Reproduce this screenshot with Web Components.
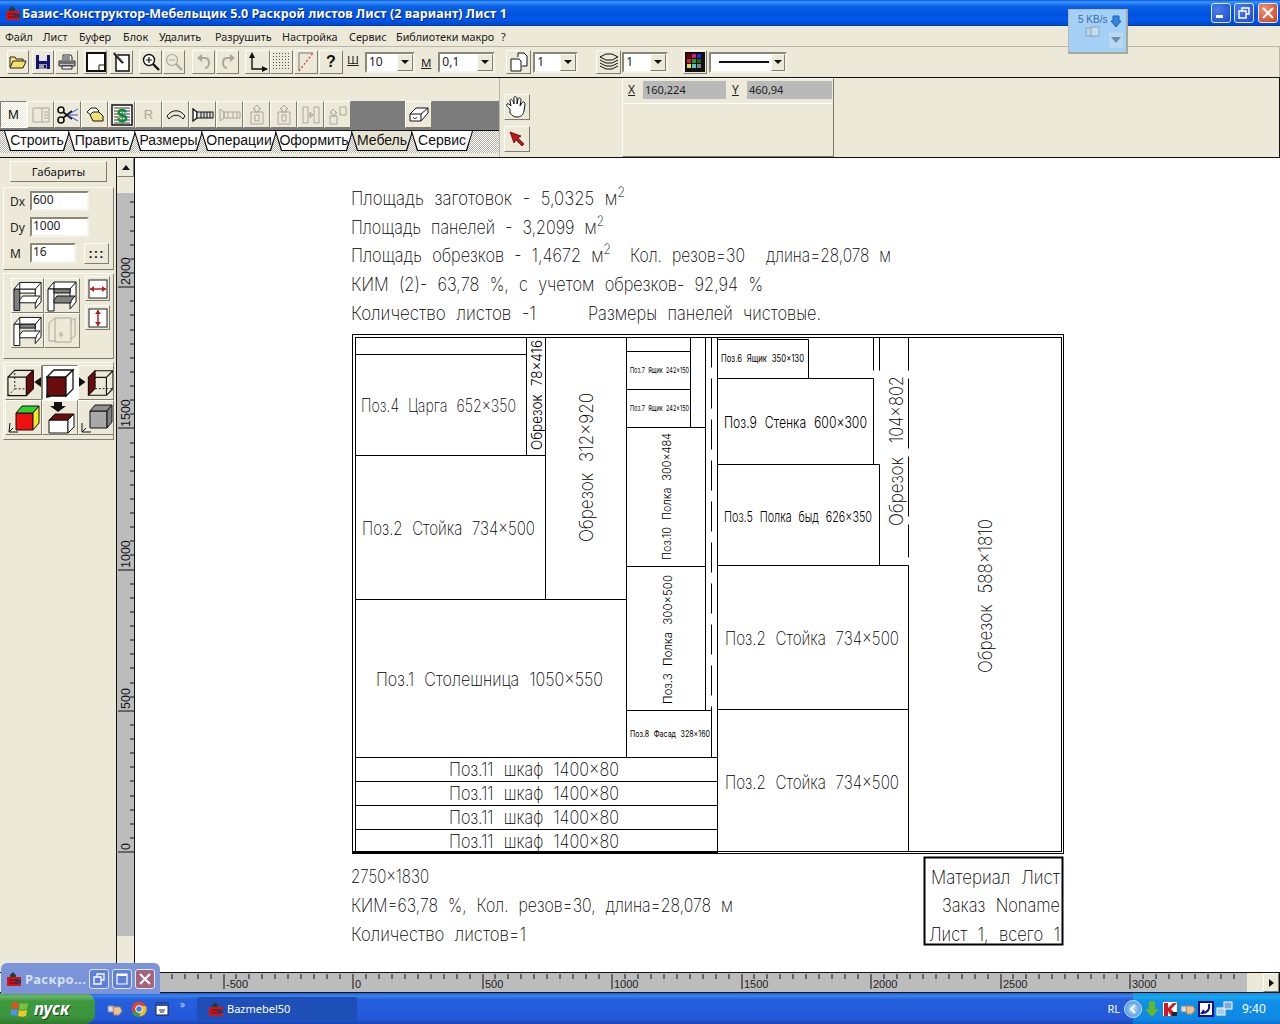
<!DOCTYPE html>
<html lang="ru">
<head>
<meta charset="utf-8">
<title>Базис-Конструктор-Мебельщик</title>
<style>
  html, body { margin: 0; padding: 0; height: 1024px; overflow: hidden; background: #ece9d8; }
  body { font-family: "Noto Sans", "Liberation Sans", sans-serif; }
</style>
</head>
<body>
<app-window></app-window>
<script>
// Shared bits
const BEVEL = 'border:1px solid;border-color:#fdfdf8 #7f7d70 #7f7d70 #fdfdf8;box-sizing:border-box;background:#ece9d8;';
const SUNK = 'border:2px solid;border-color:#8a8878 #f5f4ea #f5f4ea #8a8878;box-sizing:border-box;';
const UI_FONT = '"Noto Sans","Liberation Sans",sans-serif';
const ARIAL = '"Liberation Sans",Arial,sans-serif';

const svg = (w, h, body, vb) => `<svg xmlns="http://www.w3.org/2000/svg" width="${w}" height="${h}" viewBox="${vb || `0 0 ${w} ${h}`}">${body}</svg>`;
const LOGO = svg(16, 16, '<path d="M4 4l3-3 3 3v2H4z" fill="#1d3f3a"/><rect x="1" y="6" width="14" height="9" fill="#d0141a"/><path d="M3 9h10M3 12h10" stroke="#5a1010"/><rect x="9" y="9" width="6" height="3" fill="#243a5a"/>');

const GREY = '#a9a79a';
const ICONS = {
  open: svg(18, 16, '<path d="M1 13V3h5l1 2h7v2" fill="#f6e27a" stroke="#222"/><path d="M1 14l3-7h13l-3 7z" fill="#f5e06c" stroke="#222"/>'),
  save: svg(16, 16, '<rect x="1" y="1" width="14" height="14" fill="#14146e"/><rect x="4" y="1" width="8" height="6" fill="#e6e6f0"/><rect x="4" y="10" width="8" height="5" fill="#9c9cae"/><rect x="9" y="11" width="2" height="3" fill="#14146e"/>'),
  print: svg(18, 16, '<path d="M5 6V1h8l1 2v3" fill="#fff" stroke="#222"/><path d="M1 7h16v5H1z" fill="#bbb" stroke="#222"/><path d="M4 12h10v3H4zM2 9h14M6 3h6M6 5h6" fill="#fff" stroke="#222"/>'),
  sheet: svg(20, 20, '<path d="M1 1h18v18H1z" fill="#fff" stroke="#111" stroke-width="2"/><path d="M19 13h-6v6" fill="none" stroke="#111"/>'),
  sheetEdit: svg(18, 20, '<path d="M3 3h13v16H3z" fill="#fff" stroke="#111" stroke-width="1.5"/><path d="M1 1l9 10" stroke="#111" stroke-width="2.5"/><path d="M2 1l8 9" stroke="#999"/>'),
  zoomIn: svg(18, 18, '<circle cx="7" cy="7" r="5.5" fill="#fff" stroke="#111" stroke-width="1.4"/><path d="M4 7h6M7 4v6" stroke="#111" stroke-width="1.2"/><path d="M11 11l6 6" stroke="#111" stroke-width="2.4"/>'),
  zoomOut: svg(18, 18, `<circle cx="7" cy="7" r="5.5" fill="none" stroke="${GREY}" stroke-width="1.2"/><path d="M4 7h6" stroke="${GREY}"/><path d="M11 11l6 6" stroke="${GREY}" stroke-width="2"/>`),
  undo: svg(14, 16, `<path d="M4 4h4c3 0 4 2 4 5s-2 5-4 5" fill="none" stroke="${GREY}" stroke-width="2"/><path d="M5 0v8L0 4z" fill="${GREY}"/>`),
  redo: svg(14, 16, `<path d="M10 4H6C3 4 2 6 2 9s2 5 4 5" fill="none" stroke="${GREY}" stroke-width="2"/><path d="M9 0v8l5-4z" fill="${GREY}"/>`),
  axes: svg(20, 20, '<path d="M4 3v14h15" fill="none" stroke="#111" stroke-width="1.4"/><path d="M4 0L1 6h6zM20 17l-6-3v6z" fill="#111"/>'),
  grid: svg(18, 18, '<defs><pattern id="d" width="3" height="3" patternUnits="userSpaceOnUse"><rect width="1" height="1" fill="#555"/></pattern></defs><rect width="18" height="18" fill="url(#d)"/>'),
  snap: svg(18, 20, '<path d="M2 1v18" stroke="#777"/><path d="M2 1h14" stroke="#777"/><path d="M2 19L16 1" stroke="#d23c3c" stroke-dasharray="2 2" stroke-width="1.3"/>'),
  copies: svg(20, 20, '<path d="M9 5V1h6l3 3v10h-5" fill="#fff" stroke="#111"/><path d="M2 7h8l2 2v10H2z" fill="#fff" stroke="#111"/>'),
  layers: svg(20, 18, '<path d="M1 4l6-3h6l6 3-6 3H7zM1 7l6 3h6l6-3M1 10l6 3h6l6-3M1 13l6 3h6l6-3" fill="none" stroke="#111"/>'),
  palette: svg(20, 20, '<rect width="20" height="20" fill="#111"/><g><rect x="2" y="2" width="4" height="4" fill="#800000"/><rect x="7" y="2" width="4" height="4" fill="#e0148c"/><rect x="12" y="2" width="4" height="4" fill="#2030c0"/><rect x="2" y="7" width="4" height="4" fill="#e02020"/><rect x="7" y="7" width="4" height="4" fill="#18a018"/><rect x="12" y="7" width="4" height="4" fill="#206020"/><rect x="2" y="12" width="4" height="4" fill="#e0e040"/><rect x="7" y="12" width="4" height="4" fill="#50c8c8"/><rect x="12" y="12" width="4" height="4" fill="#808080"/></g>'),
  doc: svg(20, 18, `<path d="M2 2h16v14H2zM11 2v14M13 6h4M13 9h4M13 12h4" fill="none" stroke="${GREY}"/>`),
  cut: svg(22, 20, '<circle cx="4" cy="5" r="3" fill="none" stroke="#111" stroke-width="1.6"/><circle cx="4" cy="15" r="3" fill="none" stroke="#111" stroke-width="1.6"/><path d="M6 7l9 7M6 13l9-7" stroke="#111" stroke-width="1.6"/><path d="M12 9l9-5M12 10h9M12 11l9 5" stroke="#2f57c8"/>'),
  stack: svg(18, 16, '<path d="M1 5l4-4h5l3 3-4 4H5z" fill="#fff" stroke="#111"/><path d="M4 8l3-3h6l4 4v5H7z" fill="#f0e070" stroke="#111"/>'),
  dollar: svg(22, 22, '<rect x="1" y="1" width="20" height="20" fill="#fff" stroke="#111" stroke-width="1.5"/><path d="M3 4h16M3 7h16M3 10h16M3 13h16M3 16h16M3 19h16" stroke="#333"/><text x="11" y="18" text-anchor="middle" font-family="Liberation Sans" font-weight="700" font-size="19" fill="#0a8a30">$</text>'),
  arc: svg(20, 12, '<path d="M1 7C6 0 14 0 19 7l-2 3C13 5 7 5 3 10z" fill="none" stroke="#111"/>'),
  screw: svg(22, 14, '<path d="M1 1l4 3v6l-4 3z" fill="#fff" stroke="#111" stroke-width="1.3"/><rect x="5" y="4" width="16" height="6" fill="#ddd" stroke="#111"/><path d="M9 4v6M12 4v6M15 4v6M18 4v6" stroke="#111"/>'),
  screwOff: svg(22, 14, `<path d="M1 1l4 3v6l-4 3zM5 4h16v6H5zM9 4v6M14 4v6M18 4v6" fill="none" stroke="${GREY}"/>`),
  up1: svg(16, 20, `<path d="M8 0L4 4h2v3h4V4h2zM2 7h12v12H2zM6 10h4v6H6z" fill="none" stroke="${GREY}"/>`),
  mirror: svg(18, 18, `<path d="M1 1h5v16H1zM12 1h5v16h-5zM7 9h3M8 6l3 3-3 3z" fill="none" stroke="${GREY}"/>`),
  up4: svg(20, 20, `<path d="M5 4L2 8h2v3h3V8h2zM2 11h7v8H2zM12 2h6v8h-6z" fill="none" stroke="${GREY}"/>`),
  eraser: svg(20, 16, '<path d="M1 7l6-6h12v5l-7 8H1z" fill="#fff" stroke="#111"/><path d="M1 7h11v7M12 7l7-6M4 10c1 2 3 2 4 0" fill="none" stroke="#111"/>'),
  hand: svg(22, 24, '<path d="M4 14c-2-2-4-3-3-5 1-1 3 1 4 2L4 6c0-2 2-2 3 0l1 3V3c0-2 2-2 3 0v6l1-5c1-2 3-1 3 1l-1 6 2-3c1-2 3-1 3 1l-1 7c-1 4-3 6-7 6-4 0-5-2-7-4z" fill="#fff" stroke="#111"/>'),
  pointer: svg(16, 16, '<path d="M1 1l11 4-3 2 6 6-2 2-6-6-2 3z" fill="#c01818" stroke="#400" stroke-width=".7"/>'),
  hArrow: svg(22, 20, '<rect x="2" y="1" width="18" height="18" fill="#fff" stroke="#222"/><path d="M3 10h16" stroke="#b02020" stroke-width="1.5"/><path d="M3 10l4-3v6zM19 10l-4-3v6z" fill="#b02020"/>'),
  vArrow: svg(20, 22, '<rect x="1" y="2" width="18" height="18" fill="#fff" stroke="#222"/><path d="M10 3v16" stroke="#b02020" stroke-width="1.5"/><path d="M10 3L7 7h6zM10 19l-3-4h6z" fill="#b02020"/>')
};

// furniture pictures for the side panel
const shelf = (a, b, c) => svg(32, 32, `<path d="M2 9l6-7h22v20l-6 7V9H2z" fill="#fff" stroke="#111"/><path d="M8 2v8M24 9l6-7" stroke="#111"/><path d="M2 9v22h6V9z" fill="${a}" stroke="#111"/><path d="M8 9h16v4H8z" fill="${b}" stroke="#111"/><path d="M8 20l3-4h18l-4 5v2H8z" fill="${c}" stroke="#111"/>`);
const cube = (front, side, top, extra = '') => svg(32, 32, `<path d="M3 10h19v19H3z" fill="${front}" stroke="#111" stroke-width="1.3"/><path d="M3 10l7-7h19l-7 7z" fill="${top}" stroke="#111" stroke-width="1.3"/><path d="M22 10l7-7v19l-7 7z" fill="${side}" stroke="#111" stroke-width="1.3"/>${extra}`);
const WIRE = '<path d="M2 10h19v19H2zM2 10l7-7h19v19l-7 7M21 10l7-7" fill="none" stroke="#111" stroke-width="1.2"/><path d="M2 29l7-7V3M9 22h19" fill="none" stroke="#111" stroke-dasharray="2 2"/>';

// --- Generic widgets

class ToolBtn extends HTMLElement {
  constructor() {
    super();
    this.attachShadow({ mode: 'open' });
    const w = this.getAttribute('w') || 27;
    const h = this.getAttribute('h') || 27;
    this.shadowRoot.innerHTML = `
      <style>
        :host { display: flex; align-items: center; justify-content: center; flex: none; width: ${w}px; height: ${h}px; ${BEVEL}
          font: 13px ${ARIAL}; color: #111; }
        :host([pressed]) { background: repeating-conic-gradient(#fff 0 25%, #ece9d8 0 50%) 0 0/2px 2px; border-color: #7f7d70 #fdfdf8 #fdfdf8 #7f7d70; }
      </style><slot></slot>`;
  }
}

class ComboBox extends HTMLElement {
  constructor() {
    super();
    this.attachShadow({ mode: 'open' });
    const w = this.getAttribute('w') || 46;
    this.shadowRoot.innerHTML = `
      <style>
        :host { display: flex; flex: none; width: ${w}px; height: 21px; ${SUNK} background: #fff; font: 12px ${UI_FONT}; color: #222; }
        .v { flex: 1; padding-left: 2px; line-height: 16px; white-space: nowrap; display: flex; align-items: center; }
        .b { width: 16px; ${BEVEL} display: flex; align-items: center; justify-content: center; }
        .b i { border: 4px solid transparent; border-top: 4px solid #111; border-bottom: 0; width: 0; height: 0; }
      </style>
      <div class="v"><slot></slot></div><div class="b"><i></i></div>`;
  }
}

class TextField extends HTMLElement {
  constructor() {
    super();
    this.attachShadow({ mode: 'open' });
    const w = this.getAttribute('w') || 59;
    this.shadowRoot.innerHTML = `
      <style>
        :host { display: block; flex: none; width: ${w}px; height: 20px; ${SUNK} background: #fff;
          font: 12px ${UI_FONT}; color: #222; line-height: 13px; padding-left: 1px; }
      </style><slot></slot>`;
  }
}

class SheetTab extends HTMLElement {
  constructor() {
    super();
    this.attachShadow({ mode: 'open' });
    const w = this.getAttribute('w') || 60;
    const shape = 'polygon(0 0, 100% 0, calc(100% - 6px) 100%, 6px 100%)';
    this.shadowRoot.innerHTML = `
      <style>
        :host { display: block; flex: none; width: ${w}px; height: 20px; margin-right: -2px; background: #000; clip-path: ${shape}; }
        .in { height: 19px; margin: 0 1px; background: #fff; clip-path: ${shape}; text-align: center; font: 14px/19px ${ARIAL}; color: #111; white-space: nowrap; }
        :host([off]) .in { background: #e6e3d3; }
      </style><div class="in"><slot></slot></div>`;
  }
}

// --- Window chrome

class TitleBar extends HTMLElement {
  constructor() {
    super();
    this.attachShadow({ mode: 'open' });
    this.shadowRoot.innerHTML = `
      <style>
        :host { display: flex; align-items: center; height: 26px; flex: none; padding: 0 2px 0 5px; box-sizing: border-box;
          background: linear-gradient(#0a5ad8 0, #3d95ff 2px, #0a62e6 6px, #0053e0 14px, #0058ea 20px, #0046c8 25px, #0036a0 26px); }
        .t { margin-left: 1px; font: 700 12.5px ${UI_FONT}; letter-spacing: .04px; color: #fff; text-shadow: 1px 1px #0f1f70; white-space: nowrap; flex: 1; }
        .b { width: 20px; height: 20px; margin-left: 3px; border: 1px solid #dfe8ff; border-radius: 3px; box-sizing: border-box; display: flex; align-items: center; justify-content: center;
          background: radial-gradient(circle at 30% 30%, #4a80ee, #1f48c8); }
        .x { background: radial-gradient(circle at 30% 30%, #f09070, #c8401c); margin-left: 4px; }
      </style>
      ${LOGO}
      <span class="t">Базис-Конструктор-Мебельщик 5.0 Раскрой листов Лист (2 вариант) Лист 1</span>
      <span class="b">${svg(12, 12, '<rect x="1" y="8" width="7" height="3" fill="#fff"/>')}</span>
      <span class="b">${svg(12, 12, '<path d="M4 4V1h7v6H8M1 4h7v7H1z" fill="none" stroke="#fff" stroke-width="1.4"/>')}</span>
      <span class="b x">${svg(12, 12, '<path d="M1 1l10 10M11 1L1 11" stroke="#fff" stroke-width="2"/>')}</span>`;
  }
}

class MenuBar extends HTMLElement {
  constructor() {
    super();
    this.attachShadow({ mode: 'open' });
    const items = [['Файл', 5], ['Лист', 43], ['Буфер', 79], ['Блок', 123], ['Удалить', 159], ['Разрушить', 215], ['Настройка', 282], ['Сервис', 349], ['Библиотеки макро', 396], ['?', 501]];
    let html = '';
    items.forEach(([t, x], i) => {
      const next = i + 1 < items.length ? items[i + 1][1] : x + 10;
      html += `<span style="width:${next - x}px">${t}</span>`;
    });
    this.shadowRoot.innerHTML = `
      <style>
        :host { display: flex; align-items: center; height: 20px; flex: none; padding-left: 5px; box-sizing: border-box; background: #ece9d8;
          font: 10.8px ${UI_FONT}; color: #1a1a1a; }
        span { flex: none; white-space: nowrap; }
      </style>${html}`;
  }
}

class MainToolbar extends HTMLElement {
  constructor() {
    super();
    this.attachShadow({ mode: 'open' });
    const b = (ml, w, icon) => `<tool-btn w="${w}" h="24" style="margin-left:${ml}px">${icon}</tool-btn>`;
    this.shadowRoot.innerHTML = `
      <style>
        :host { display: flex; align-items: center; height: 31px; flex: none; box-sizing: border-box; padding: 0 0 0 7px; background: #ece9d8;
          border-top: 1px solid #b9b7a8; border-right: 1px solid #b9b7a8; font: 11.5px ${UI_FONT}; color: #222; }
        u { flex: none; }
      </style>
      ${b(0, 22, ICONS.open)}${b(3, 22, ICONS.save)}${b(1, 23, ICONS.print)}
      ${b(6, 23, ICONS.sheet)}${b(3, 23, ICONS.sheetEdit)}
      ${b(6, 23, ICONS.zoomIn)}${b(1, 22, ICONS.zoomOut)}
      ${b(7, 23, ICONS.undo)}${b(1, 23, ICONS.redo)}
      ${b(6, 25, ICONS.axes)}${b(0, 23, ICONS.grid)}${b(1, 24, ICONS.snap)}
      ${b(1, 24, '<b style="font:700 16px Liberation Sans">?</b>')}
      <u style="margin:-6px 0 0 4px">Ш</u>
      <combo-box w="50" style="margin-left:6px">10</combo-box>
      <u style="margin-left:6px">М</u>
      <combo-box w="57" style="margin-left:7px">0,1</combo-box>
      ${b(11, 25, ICONS.copies)}
      <combo-box w="45" style="margin-left:2px">1</combo-box>
      ${b(18, 25, ICONS.layers)}
      <combo-box w="46" style="margin-left:1px">1</combo-box>
      ${b(15, 24, ICONS.palette)}
      <combo-box w="78" style="margin-left:2px"><svg width="52" height="3" style="margin-left:6px"><rect width="50" height="2" y="0" fill="#111"/></svg></combo-box>`;
  }
}

class BlockRow extends HTMLElement {
  constructor() {
    super();
    this.attachShadow({ mode: 'open' });
    const list = [ICONS.doc, ICONS.cut, ICONS.stack, ICONS.dollar, `<span style="color:${GREY}">R</span>`, ICONS.arc, ICONS.screw, ICONS.screwOff, ICONS.up1, ICONS.up1, ICONS.mirror, ICONS.up4];
    this.shadowRoot.innerHTML = `
      <style>
        :host { display: flex; height: 100%; background: #7c7c7c; }
      </style>
      <tool-btn pressed>М</tool-btn>
      ${list.map(i => `<tool-btn>${i}</tool-btn>`).join('')}
      <tool-btn style="margin-left:54px">${ICONS.eraser}</tool-btn>`;
  }
}

class BlockPanel extends HTMLElement {
  constructor() {
    super();
    this.attachShadow({ mode: 'open' });
    this.shadowRoot.innerHTML = `
      <style>
        :host { display: flex; height: 81px; flex: none; box-sizing: border-box; background: #ece9d8; border-top: 1px solid #111; border-bottom: 1px solid #111; border-right: 1px solid #111; }
        .l { width: 500px; flex: none; display: flex; flex-direction: column; border-right: 1px solid #b9b7a8; box-sizing: border-box; }
        .sp { height: 23px; flex: none; }
        .rw { height: 29px; flex: none; }
        .tabs { height: 22px; flex: none; display: flex; padding: 0 0 0 4px; border-top: 1px solid #111; background: repeating-conic-gradient(#fff 0 25%, #b4b2a6 0 50%) 0 0/2px 2px; }
        .m { width: 33px; flex: none; display: flex; flex-direction: column; gap: 6px; padding: 16px 0 0 4px; box-sizing: border-box; }
        .st { margin-left: 89px; width: 212px; flex: none; height: 79px; ${BEVEL} font: 11px ${UI_FONT}; color: #222; }
        .c { display: flex; align-items: center; height: 21px; padding-bottom: 3px; border-bottom: 1px solid #fff; }
        .c u { width: 9px; margin: 0 6px; font-size: 12px; }
        .f { height: 18px; background: #b9b9b9; line-height: 18px; padding-left: 2px; box-sizing: border-box; }
      </style>
      <div class="l">
        <div class="sp"></div>
        <div class="rw"><block-row></block-row></div>
        <div class="tabs">
          <sheet-tab w="66">Строить</sheet-tab><sheet-tab w="68">Править</sheet-tab><sheet-tab w="69">Размеры</sheet-tab>
          <sheet-tab w="76">Операции</sheet-tab><sheet-tab w="78">Оформить</sheet-tab><sheet-tab w="62" off>Мебель</sheet-tab><sheet-tab w="62">Сервис</sheet-tab>
        </div>
      </div>
      <div class="m">
        <tool-btn w="26" h="26">${ICONS.hand}</tool-btn>
        <tool-btn w="26" h="26">${ICONS.pointer}</tool-btn>
      </div>
      <div class="st">
        <div class="c"><u style="margin-left:5px">X</u><div class="f" style="width:83px">160,224</div><u>Y</u><div class="f" style="width:85px">460,94</div></div>
      </div>`;
  }
}

// --- Side panel

class SidePanel extends HTMLElement {
  constructor() {
    super();
    this.attachShadow({ mode: 'open' });
    const g = s => `<tool-btn w="${s[0]}" h="${s[1]}"${s[3] || ''}>${s[2]}</tool-btn>`;
    this.shadowRoot.innerHTML = `
      <style>
        :host { display: flex; flex-direction: column; width: 116px; flex: none; box-sizing: border-box; padding-top: 3px; background: #ece9d8; font: 12px ${UI_FONT}; color: #222; }
        .gab { margin-left: 10px; font: 11.5px ${UI_FONT}; }
        .grp { ${BEVEL} margin: 5px 2px 0 3px; }
        .fields { height: 83px; display: grid; grid-template-columns: 26px 1fr; grid-auto-rows: 26px; align-items: center; }
        .fields label { padding-left: 6px; font-size: 12px; }
        .last { display: flex; align-items: center; }
        .boxes { height: 86px; display: flex; padding: 4px 0 0 7px; margin-top: 3px; }
        .bx { display: grid; grid-template-columns: 33px 36px; grid-auto-rows: 35px; }
        .sm { display: flex; flex-direction: column; gap: 4px; margin-left: 5px; margin-top: -2px; }
        .cubes { display: grid; grid-template-columns: 37px 36px 36px; grid-auto-rows: 35px; padding: 2px 0 4px 1px; margin-top: 3px; }
      </style>
      <tool-btn class="gab" w="97" h="21">Габариты</tool-btn>
      <div class="grp fields">
        <label>Dx</label><text-field>600</text-field>
        <label>Dy</label><text-field>1000</text-field>
        <label>М</label><div class="last"><text-field w="46">16</text-field><tool-btn w="25" h="21" style="margin-left:8px"><b style="letter-spacing:1px">:::</b></tool-btn></div>
      </div>
      <div class="grp boxes">
        <div class="bx">
          ${g([33, 35, shelf('#808080', '#fff', '#fff')])}${g([36, 35, shelf('#fff', '#808080', '#808080')])}
          ${g([33, 35, shelf('#fff', '#808080', '#fff')])}${g([36, 35, svg(30, 32, `<path d="M2 8l6-5h16v24H8v-1H2zM8 3v24M13 18h2v3h-2zM24 6l4-3v18l-4 3" fill="none" stroke="${GREY}"/>`)])}
        </div>
        <div class="sm">
          ${g([25, 25, ICONS.hArrow])}${g([25, 25, ICONS.vArrow])}
        </div>
      </div>
      <div class="grp cubes">
        ${g([37, 35, svg(36, 32, WIRE + '<path d="M21 10l7-7v19l-7 7z" fill="#6a0c0c" stroke="#111"/><path d="M29 15l7-5v10z" fill="#111"/>')])}
        <tool-btn w="36" h="35" pressed style="background:#fff">${cube('#6a0c0c', '#fff', '#fff', '<path d="M2 31l5-1-4-4z" fill="#111"/>')}</tool-btn>
        ${g([36, 35, svg(36, 32, '<g transform="translate(8 0)">' + WIRE + '<path d="M2 10l7-7v19l-7 7z" fill="#6a0c0c" stroke="#111"/></g><path d="M7 15L0 10v10z" fill="#111"/>')])}
        ${g([37, 35, svg(34, 32, '<path d="M9 11h17v17H9z" fill="#f01010" stroke="#111"/><path d="M9 11l6-7h17l-6 7z" fill="#30d030" stroke="#111"/><path d="M26 11l6-7v17l-6 7z" fill="#f0e820" stroke="#111"/><path d="M2 30h9M2 30l1-9M2 30l4-4" stroke="#111"/>')])}
        ${g([36, 35, svg(32, 32, '<path d="M10 0h8v4h4l-8 6-8-6h4z" fill="#111"/><path d="M5 18h19v13H5z" fill="#fff" stroke="#111"/><path d="M5 18l6-6h19l-6 6z" fill="#6a0c0c" stroke="#111"/><path d="M24 18l6-6v13l-6 6z" fill="#fff" stroke="#111"/>')])}
        ${g([36, 35, svg(34, 32, '<path d="M11 9h17v17H11z" fill="#a8a8a8" stroke="#111"/><path d="M11 9l5-6h17l-5 6z" fill="#909090" stroke="#111"/><path d="M28 9l5-6v17l-5 6z" fill="#808080" stroke="#111"/><path d="M3 30h9M3 30v-9M3 30l4-4" stroke="#111"/>')])}
      </div>`;
  }
}

// --- Rulers

class VRuler extends HTMLElement {
  constructor() {
    super();
    this.attachShadow({ mode: 'open' });
    let t = '';
    for (let i = 0; i <= 50; i++) {
      const y = 851 - 157 - i * 14.12;
      if (y < 35) break;
      t += `<path d="M${i % 10 == 0 ? 1 : 13} ${y.toFixed(0)}h${i % 10 == 0 ? 16 : 4}" stroke="#111"/>`;
    }
    const labels = [[0, '0'], [141, '500'], [282, '1000'], [423, '1500'], [565, '2000']];
    labels.forEach(([d, s]) => {
      const y = 851 - 157 - d - 2;
      t += `<text transform="rotate(-90 13 ${y})" x="13" y="${y}" font-family="Liberation Sans" font-size="12.5" fill="#111">${s}</text>`;
    });
    this.shadowRoot.innerHTML = `
      <style>
        :host { display: flex; flex-direction: column; width: 19px; flex: none; box-sizing: border-box; border-left: 1px solid #111; border-right: 1px solid #111; background: #ece9d8; }
        .up { height: 19px; flex: none; ${BEVEL} display: flex; align-items: center; justify-content: center; }
        .up i { border: 4px solid transparent; border-bottom: 5px solid #111; border-top: 0; }
        .sc { height: 16px; flex: none; }
        .tr { height: 743px; flex: none; background: #bcbcbc; position: relative; overflow: hidden; }
        .tr svg { position: absolute; left: 0; top: -35px; }
      </style>
      <div class="up"><i></i></div><div class="sc"></div>
      <div class="tr">${svg(17, 815, t)}</div>`;
  }
}

class HRuler extends HTMLElement {
  constructor() {
    super();
    this.attachShadow({ mode: 'open' });
    let t = '';
    for (let i = -14; i < 70; i++) {
      const x = 353 - 160 + i * 12.95;
      if (x < 3 || x > 1085) continue;
      const major = i % 10 == 0;
      t += `<path d="M${x.toFixed(0)} 1v${major ? 15 : 5}" stroke="#111"/>`;
      if (major) t += `<text x="${x.toFixed(0) * 1 + 2}" y="15" font-family="Liberation Sans" font-size="11" fill="#222">${i * 50}</text>`;
    }
    this.shadowRoot.innerHTML = `
      <style>
        :host { display: flex; height: 21px; flex: none; box-sizing: border-box; border-top: 1px solid #111; border-bottom: 1px solid #111; background: #ece9d8; padding-left: 160px; border-right: 1px solid #111; }
        .tr { width: 1087px; flex: none; background: #bcbcbc; }
        .sc { flex: 1; }
        .rt { width: 16px; ${BEVEL} display: flex; align-items: center; justify-content: center; }
        .rt i { border: 4px solid transparent; border-left: 5px solid #111; border-right: 0; }
      </style>
      <div class="tr">${svg(1087, 19, t)}</div><div class="sc"></div><div class="rt"><i></i></div>`;
  }
}

// --- The drawing: a free canvas with the cutting plan, coordinates are page px minus the canvas origin

const DX = 135, DY = 158;
const LINES = [
  // [x1,y1,x2,y2,dash]
  [355, 354, 527, 354], [527, 337, 527, 455], [546, 337, 546, 599], [355, 455, 546, 455], [355, 599, 627, 599],
  [627, 337, 627, 757], [627, 351, 691, 351], [627, 389, 691, 389], [691, 337, 691, 427], [627, 427, 706, 427],
  [627, 566, 706, 566], [706, 337, 706, 710], [627, 710, 712, 710], [712, 710, 712, 757], [712, 337, 712, 710, '30 11'],
  [355, 757, 718, 757], [355, 781, 718, 781], [355, 805, 718, 805], [355, 829, 718, 829], [718, 337, 718, 851],
  [718, 339, 809, 339], [809, 339, 809, 378], [718, 378, 874, 378], [874, 337, 874, 370], [874, 378, 874, 464],
  [718, 464, 880, 464], [880, 337, 880, 370], [880, 464, 880, 565], [718, 565, 909, 565], [718, 709, 909, 709],
  [909, 337, 909, 565, '33 8 70 8 60 8'], [909, 565, 909, 851]
];
// the square mark rides in the same text as its line
const SQ = '<tspan dy="-8" font-size="14">2</tspan>';
// text, x, baseline, length, size, rotated
const TEXTS = [
  ['Площадь заготовок - 5,0325 м' + SQ, 351, 205, 274, 19],
  ['Площадь панелей - 3,2099 м' + SQ, 351, 234, 253, 19],
  ['Площадь обрезков - 1,4672 м' + SQ, 351, 262, 260, 19],
  ['Кол. резов=30', 630, 262, 115, 19], ['длина=28,078 м', 766, 262, 125, 19],
  ['КИМ (2)- 63,78 %, с учетом обрезков- 92,94 %', 351, 291, 412, 19],
  ['Количество листов -1', 351, 320, 185, 19], ['Размеры панелей чистовые.', 588, 320, 233, 19],
  ['Поз.4 Царга 652×350', 361, 412, 155, 18],
  ['Поз.2 Стойка 734×500', 362, 535, 173, 19],
  ['Поз.1 Столешница 1050×550', 376, 686, 227, 19],
  ['Поз.7 Ящик 242×150', 630, 373, 59, 8], ['Поз.7 Ящик 242×150', 630, 411, 59, 8],
  ['Поз.8 Фасад 328×160', 630, 737, 80, 9],
  ['Поз.6 Ящик 350×130', 721, 362, 83, 10],
  ['Поз.9 Стенка 600×300', 724, 428, 143, 16],
  ['Поз.5 Полка быд 626×350', 724, 522, 148, 15],
  ['Поз.2 Стойка 734×500', 725, 645, 174, 19], ['Поз.2 Стойка 734×500', 725, 789, 174, 19],
  ['Поз.11 шкаф 1400×80', 449, 776, 170, 19], ['Поз.11 шкаф 1400×80', 449, 800, 170, 19],
  ['Поз.11 шкаф 1400×80', 449, 824, 170, 19], ['Поз.11 шкаф 1400×80', 449, 848, 170, 19],
  ['2750×1830', 351, 883, 78, 19],
  ['КИМ=63,78 %, Кол. резов=30, длина=28,078 м', 351, 912, 382, 19],
  ['Количество листов=1', 351, 941, 175, 19],
  ['Материал Лист', 931, 884, 129, 19], ['Заказ Noname', 942, 912, 118, 19], ['Лист 1, всего 1', 929, 941, 131, 19],
  // rotated: x is the baseline, y the start, reading upward
  ['Обрезок 78×416', 542, 450, 110, 15, 1],
  ['Обрезок 312×920', 593, 542, 149, 19, 1],
  ['Поз.10 Полка 300×484', 671, 560, 127, 12, 1],
  ['Поз.3 Полка 300×500', 672, 704, 129, 12, 1],
  ['104×802', 903, 443, 67, 19, 1], ['Обрезок', 903, 526, 69, 19, 1],
  ['Обрезок 588×1810', 992, 673, 154, 19, 1]
];

class CadDrawing extends HTMLElement {
  constructor() {
    super();
    this.attachShadow({ mode: 'open' });
    let b = '';
    const rect = (x, y, w, h, sw) => `<rect x="${x - DX + .5}" y="${y - DY + .5}" width="${w}" height="${h}" fill="none" stroke="#000" stroke-width="${sw}"/>`;
    b += rect(352, 334, 711, 519, 1) + rect(355, 337, 706, 514, 1);
    b += `<rect x="${352 - DX}" y="${851 - DY}" width="366" height="2" fill="#000"/>`;
    b += `<rect x="${924 - DX + .5}" y="${857 - DY + .5}" width="138" height="87" fill="none" stroke="#000" stroke-width="2"/>`;
    LINES.forEach(([x1, y1, x2, y2, d]) => {
      const a = Math.max(x1 - 1, 355) - DX + .5, c = Math.max(x2 - 1, 355) - DX + .5;
      b += `<line x1="${a}" y1="${y1 - DY + .5}" x2="${c}" y2="${y2 - DY + .5}" stroke="#000"${d ? ` stroke-dasharray="${d}"` : ''}/>`;
    });
    TEXTS.forEach(([s, x, y, len, size, rot]) => {
      const px = x - DX, py = y - DY;
      const tr = rot ? ` transform="rotate(-90 ${px} ${py})"` : '';
      const cls = size < 11 ? ' class="sm"' : size <= 16 ? ' class="md"' : '';
      b += `<text${cls} x="${px}" y="${py}" font-size="${size}" textLength="${len}" lengthAdjust="spacingAndGlyphs"${tr}>${s}</text>`;
    });
    this.shadowRoot.innerHTML = `
      <style>
        :host { display: block; flex: 1; background: #fff; overflow: hidden; }
        text { font-family: "Inter", "Liberation Sans", sans-serif; font-weight: 200; fill: #000; white-space: pre; word-spacing: .35em; }
        text.md { font-weight: 300; }
        text.sm { font-weight: 400; }
        svg { display: block; }
      </style>${svg(1145, 815, b)}`;
  }
}

// --- Overlays and taskbar

class MiniWindow extends HTMLElement {
  constructor() {
    super();
    this.attachShadow({ mode: 'open' });
    const btn = (ic, c) => `<span class="b" style="${c || ''}">${ic}</span>`;
    this.shadowRoot.innerHTML = `
      <style>
        :host { position: absolute; left: 1px; top: 963px; width: 159px; height: 31px; box-sizing: border-box; display: flex; align-items: center; padding: 0 5px;
          background: #7b93d8; border-radius: 6px 6px 0 0; }
        .t { flex: 1; margin-left: 3px; font: 700 13px ${UI_FONT}; letter-spacing: .4px; color: #d8e2fb; white-space: nowrap; }
        .b { width: 20px; height: 20px; margin-left: 3px; border: 1px solid #dfe8ff; border-radius: 3px; box-sizing: border-box; background: #5e7fdc; display: flex; align-items: center; justify-content: center; }
      </style>
      ${LOGO}<span class="t">Раскро...</span>
      ${btn(svg(12, 12, '<path d="M4 4V1h7v6H8M1 4h7v7H1z" fill="none" stroke="#fff" stroke-width="1.3"/>'))}
      ${btn(svg(12, 12, '<path d="M1 1h10v10H1z" fill="none" stroke="#fff" stroke-width="1.2"/><path d="M1 2h10" stroke="#fff" stroke-width="2"/>'))}
      ${btn(svg(12, 12, '<path d="M1 1l10 10M11 1L1 11" stroke="#fff" stroke-width="2"/>'), 'background:#a4647c')}`;
  }
}

class SpeedMeter extends HTMLElement {
  constructor() {
    super();
    this.attachShadow({ mode: 'open' });
    this.shadowRoot.innerHTML = `
      <style>
        :host { position: absolute; left: 1068px; top: 9px; width: 60px; height: 45px; box-sizing: border-box; border: 1px solid #b8b8a8; border-bottom: 2px solid #a8a898; border-right: 2px solid #a8a898;
          background: #a4d0f6; font: 10px ${ARIAL}; color: #3a6ea8; }
        .s { position: absolute; left: 9px; top: 4px; white-space: nowrap; }
        svg { position: absolute; }
        .r { position: absolute; left: 40px; top: 22px; width: 14px; height: 16px; background: #b9d8f4; }
      </style>
      <span class="s">5 KB/s</span>
      ${svg(12, 14, '<path d="M3 1h6v5h2l-5 6-5-6h2z" fill="#2c86e0" stroke="#1c60b0"/>').replace('<svg', '<svg style="left:41px;top:5px"')}
      ${svg(16, 14, '<rect x="1" y="2" width="8" height="8" fill="#b5d4ea" stroke="#88a8c0"/><rect x="6" y="1" width="8" height="9" fill="#c4dcec" stroke="#88a8c0"/>').replace('<svg', '<svg style="left:16px;top:16px"')}
      <span class="r"></span>
      ${svg(12, 8, '<path d="M1 1h10L6 7z" fill="#6f8ca8"/>').replace('<svg', '<svg style="left:41px;top:26px"')}`;
  }
}

class TaskBar extends HTMLElement {
  constructor() {
    super();
    this.attachShadow({ mode: 'open' });
    this.shadowRoot.innerHTML = `
      <style>
        :host { display: flex; align-items: center; height: 31px; flex: none; box-sizing: border-box;
          background: linear-gradient(#1c5fd6 0, #3b84ee 3px, #2560dc 6px, #2358d8 26px, #1a46b4 31px); color: #fff; font: 11px ${UI_FONT}; }
        .start { width: 95px; height: 100%; flex: none; display: flex; align-items: center; padding-left: 11px; box-sizing: border-box; gap: 5px;
          border-radius: 0 10px 10px 0; background: linear-gradient(#3f8f3f 0, #6fb66f 3px, #3d9a3d 8px, #3c943c 24px, #2f7a2f 31px);
          font: italic 700 17px ${UI_FONT}; text-shadow: 1px 1px #1a4a1a; }
        .ql { display: flex; align-items: center; gap: 8px; margin-left: 12px; width: 90px; flex: none; }
        .more { font-size: 10px; margin: -10px 0 0 3px; color: #c8d8ff; }
        .task { width: 160px; height: 24px; flex: none; border-radius: 3px; background: #1e4fb8; display: flex; align-items: center; padding-left: 11px; gap: 3px; box-sizing: border-box; font-size: 11px; }
        .rl { margin-left: auto; margin-right: 13px; font-size: 11px; }
        .tray { width: 147px; height: 100%; flex: none; box-sizing: border-box; display: flex; align-items: center; gap: 2px; padding-left: 0;
          background: linear-gradient(#1090e8 0, #18a8f0 4px, #1090e8 8px, #0e88e4 26px, #0c70d0 31px); }
        .clock { margin-left: 6px; font-size: 12px; white-space: nowrap; }
        .ch { width: 18px; height: 18px; flex: none; border-radius: 50%; background: radial-gradient(#bcdcff, #2a80e0); border: 1px solid #d0e4ff; display: flex; align-items: center; justify-content: center; margin-left: -9px; box-sizing: border-box; }
      </style>
      <div class="start">
        ${svg(18, 18, '<path d="M1 3c2-1 4-1 7 0l-1 6c-2-1-4-1-7 0z" fill="#e0501c"/><path d="M9 3c3 1 5 1 8 0l-1 6c-3 1-5 1-8 0z" fill="#7cc040"/><path d="M0 10c2-1 4-1 7 0l-1 6c-2-1-4-1-7 0z" fill="#4c94e8"/><path d="M8 10c3 1 5 1 8 0l-1 6c-3 1-5 1-8 0z" fill="#f0c828"/>')}
        <span>пуск</span>
      </div>
      <div class="ql">
        ${svg(16, 16, '<rect x="1" y="5" width="6" height="6" fill="#ddd" stroke="#789"/><path d="M6 6h7l2 4-3 4H7z" fill="#f0c090" stroke="#a86"/>')}
        ${svg(16, 16, '<circle cx="8" cy="8" r="7.5" fill="#e04030"/><path d="M8 8L1 12a7.5 7.5 0 0 0 8 3.5z" fill="#3ca040"/><path d="M8 8l1 7.5A7.5 7.5 0 0 0 15 5H8z" fill="#f0c020"/><circle cx="8" cy="8" r="3.4" fill="#4080e8" stroke="#fff"/>')}
        ${svg(14, 14, '<rect x="1" y="1" width="12" height="12" fill="#fff" stroke="#223"/><rect x="1" y="1" width="12" height="3" fill="#3050a0"/><path d="M4 8h6M5 10h4" stroke="#223"/>')}
        <span class="more">»</span>
      </div>
      <div class="task">${LOGO}<span>Bazmebel50</span></div>
      <span class="rl">RL</span>
      <div class="tray">
        <span class="ch">${svg(8, 10, '<path d="M6 1L2 5l4 4" fill="none" stroke="#fff" stroke-width="2"/>')}</span>
        ${svg(16, 18, '<path d="M5 1h6v8h4l-7 8-7-8h4z" fill="#62b82c"/>')}
        ${svg(16, 16, '<rect x="1" y="1" width="14" height="14" fill="#fff"/><path d="M2 2h4v5l5-5h4L9 8l6 7H9L6 10v5H2z" fill="#d01828"/><rect x="10" y="11" width="5" height="4" fill="#222"/>')}
        ${svg(16, 16, '<rect x="1" y="5" width="6" height="6" fill="#ddd" stroke="#789"/><path d="M6 5h7l2 4-3 4H7z" fill="#f0c090" stroke="#a86"/>')}
        ${svg(16, 16, '<rect x="1" y="1" width="14" height="14" fill="#fff" stroke="#101080" stroke-width="2"/><path d="M11 3c1 6-2 9-7 9l2-3" fill="none" stroke="#101080" stroke-width="2"/>')}
        ${svg(18, 18, '<rect x="1" y="8" width="8" height="7" fill="#a8c8ec" stroke="#fff"/><rect x="8" y="2" width="8" height="7" fill="#7ca8e0" stroke="#fff"/>')}
        <span class="clock">9:40</span>
      </div>`;
  }
}

class AppWindow extends HTMLElement {
  constructor() {
    super();
    this.attachShadow({ mode: 'open' });
    this.shadowRoot.innerHTML = `
      <style>
        :host { display: flex; flex-direction: column; position: relative; width: 1280px; height: 1024px; overflow: hidden; background: #ece9d8; }
        .work { display: flex; flex: 1; min-height: 0; }
      </style>
      <title-bar></title-bar>
      <menu-bar></menu-bar>
      <main-toolbar></main-toolbar>
      <block-panel></block-panel>
      <div class="work">
        <side-panel></side-panel>
        <v-ruler></v-ruler>
        <cad-drawing></cad-drawing>
      </div>
      <h-ruler></h-ruler>
      <task-bar></task-bar>
      <mini-window></mini-window>
      <speed-meter></speed-meter>`;
  }
}

customElements.define('tool-btn', ToolBtn);
customElements.define('combo-box', ComboBox);
customElements.define('text-field', TextField);
customElements.define('sheet-tab', SheetTab);
customElements.define('title-bar', TitleBar);
customElements.define('menu-bar', MenuBar);
customElements.define('main-toolbar', MainToolbar);
customElements.define('block-row', BlockRow);
customElements.define('block-panel', BlockPanel);
customElements.define('side-panel', SidePanel);
customElements.define('v-ruler', VRuler);
customElements.define('h-ruler', HRuler);
customElements.define('cad-drawing', CadDrawing);
customElements.define('mini-window', MiniWindow);
customElements.define('speed-meter', SpeedMeter);
customElements.define('task-bar', TaskBar);
customElements.define('app-window', AppWindow);
</script>
</body>
</html>
